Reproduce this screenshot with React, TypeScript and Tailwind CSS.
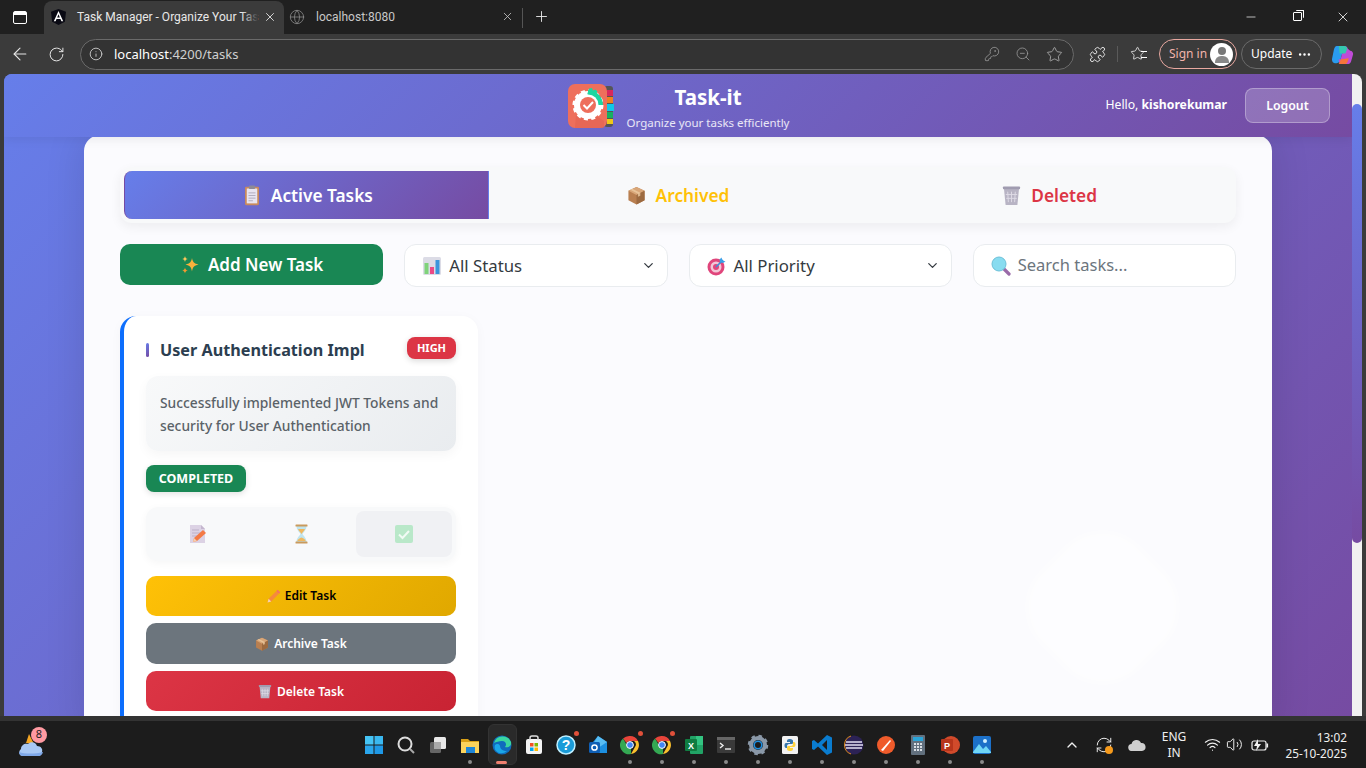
import React from 'react';
import { ArrowLeft, RotateCw, RefreshCw, Info, KeyRound, ZoomOut, Star, Puzzle, X, Plus, Minus, Globe, ChevronDown, ChevronUp, Wifi, Volume2, MoreHorizontal } from 'lucide-react';

type IconProps = { className?: string };

const Clipboard = ({ className }: IconProps) => (
  <svg viewBox="0 0 20 24" className={className}>
    <rect x="2" y="2" width="16" height="21" rx="1.500" fill="#c98a5c" />
    <rect x="4" y="4" width="12" height="17" fill="#e8e4f0" />
    <rect x="6.500" y="0.500" width="7" height="4" rx="1" fill="#8d8a96" />
    <path d="M6 9h8M6 12h8M6 15h8M6 18h5" stroke="#aaa6b8" strokeWidth="1" />
  </svg>
);

const Box = ({ className }: IconProps) => (
  <svg viewBox="0 0 20 20" className={className}>
    <path d="M10 1l8.500 4v10L10 19.500 1.500 15V5z" fill="#b97f50" />
    <path d="M10 1l8.500 4L10 9.500 1.500 5z" fill="#d8a678" />
    <path d="M10 9.500v10l8.500-4.500V5z" fill="#9c6a40" />
    <path d="M5.500 3l8.500 4.200v3l-2.500 1V8.200L3.500 4z" fill="#eccaa0" opacity=".8" />
  </svg>
);

const Trash = ({ className }: IconProps) => (
  <svg viewBox="0 0 20 22" className={className}>
    <path d="M2 3h16l-1.800 18H3.800z" fill="#b8b4c4" />
    <rect x="1" y="1.500" width="18" height="3" rx=".8" fill="#a09cb0" />
    <path d="M6 7l.7 11M10 7v11M14 7l-.7 11M4 10h12M4.500 14h11" stroke="#dedbe6" strokeWidth="1" />
  </svg>
);

const Sparkles = ({ className }: IconProps) => (
  <svg viewBox="0 0 20 20" className={className}>
    <path d="M12 3c.8 4 2 5.500 6.500 6.500C14 10.500 12.800 12 12 16.500 11.200 12 10 10.500 5.500 9.500 10 8.500 11.200 7 12 3z" fill="#f9b13c" />
    <path d="M5 1c.4 2 1 2.600 3 3-2 .4-2.600 1-3 3-.4-2-1-2.600-3-3 2-.4 2.600-1 3-3z" fill="#fcc65a" />
    <path d="M5 12.500c.4 2 1 2.600 3 3-2 .4-2.600 1-3 3-.4-2-1-2.600-3-3 2-.4 2.600-1 3-3z" fill="#f59a2f" />
  </svg>
);

const BarChart = ({ className }: IconProps) => (
  <svg viewBox="0 0 20 20" className={className}>
    <rect x="1" y="1" width="18" height="18" rx="1.500" fill="#dcdce6" />
    <rect x="2.500" y="7" width="4" height="11" fill="#7fd37a" />
    <rect x="8" y="11" width="4" height="7" fill="#ec4a86" />
    <rect x="13.500" y="4" width="4" height="14" fill="#3b95dc" />
  </svg>
);

const Target = ({ className }: IconProps) => (
  <svg viewBox="0 0 20 20" className={className}>
    <circle cx="9" cy="11" r="8.500" fill="#e0457b" />
    <circle cx="9" cy="11" r="5.500" fill="#f2c6d6" />
    <circle cx="9" cy="11" r="3" fill="#e0457b" />
    <path d="M9 11l7-7" stroke="#3a8fd8" strokeWidth="1.600" />
    <path d="M14.500 1.500l1 3 3 1-2.500 1.500-3-1-.5-2.500z" fill="#3a9fe8" />
  </svg>
);

const Magnifier = ({ className }: IconProps) => (
  <svg viewBox="0 0 20 20" className={className}>
    <path d="M12.500 12.500l5.500 5.500" stroke="#9a6aa8" strokeWidth="3.200" strokeLinecap="round" />
    <circle cx="8" cy="8" r="7" fill="#88dcf0" stroke="#6cc0d8" strokeWidth="1" />
  </svg>
);

const MemoPencil = ({ className }: IconProps) => (
  <svg viewBox="0 0 20 20" className={className}>
    <path d="M2 1h11l4 4v14H2z" fill="#dcd2e4" />
    <path d="M13 1l4 4h-4z" fill="#c4b6ce" />
    <path d="M4 6h7M4 9h9M4 12h5" stroke="#bdb0c8" strokeWidth="1" />
    <path d="M5 18l1-4 9-8 3 3-9 8z" fill="#f47a45" />
    <path d="M5 18l1-4 3 3z" fill="#f5d0b0" />
  </svg>
);

const Hourglass = ({ className }: IconProps) => (
  <svg viewBox="0 0 16 20" className={className}>
    <path d="M3 2h10c0 4-3 6-4 8 1 2 4 4 4 8H3c0-4 3-6 4-8-1-2-4-4-4-8z" fill="#bfe4ee" />
    <path d="M4.500 5h7c-.6 1.800-2.500 3-3.500 5-1-2-2.900-3.200-3.500-5zM3.800 17c.4-2 2.800-3 4.200-3.500 1.400.5 3.800 1.500 4.200 3.500z" fill="#f0b860" />
    <rect x="2" y="0.500" width="12" height="2" rx=".6" fill="#c99a5c" />
    <rect x="2" y="17.500" width="12" height="2" rx=".6" fill="#c99a5c" />
  </svg>
);

const CheckBox = ({ className }: IconProps) => (
  <svg viewBox="0 0 20 20" className={className}>
    <rect x="1" y="1" width="18" height="18" rx="2" fill="#b9e8c9" />
    <path d="M5 10.500l3.500 3.500L15 7" fill="none" stroke="#f2fbf5" strokeWidth="2" />
  </svg>
);

const Pencil = ({ className }: IconProps) => (
  <svg viewBox="0 0 20 20" className={className}>
    <path d="M2 18l1.500-5L14 2.500 17.500 6 7 16.500z" fill="#f58a3c" />
    <path d="M2 18l1.500-5 3.500 3.500z" fill="#f6d3ad" />
    <path d="M14 2.500l1.500-1.500 3.500 3.500L17.500 6z" fill="#f26b6b" />
  </svg>
);

const Logo = () => (
  <svg viewBox="0 0 46 46" className="h-[46px] w-[46px] shrink-0">
    <rect x="36" y="3" width="9" height="41" rx="3" fill="#555" />
    <rect x="39" y="7" width="6" height="6" fill="#d8285c" />
    <rect x="39" y="14" width="6" height="6" fill="#f08020" />
    <rect x="39" y="21" width="7" height="7" fill="#10c8e8" />
    <rect x="39" y="29" width="6" height="6" fill="#18b060" />
    <rect x="39" y="36" width="6" height="5" fill="#f0c818" />
    <rect x="0" y="1" width="39" height="44" rx="7" fill="#ee6f5c" />
    <path d="M8 32L30 34 36 38V45H7z" fill="#e0604e" opacity=".5" />
    <circle cx="20" cy="22" r="14" fill="#fff" stroke="#fff" strokeWidth="3" strokeDasharray="4 3.300" />
    <path d="M20 7a15 15 0 0 1 15 15h-5a10 10 0 0 0-10-10z" fill="#1ed6a0" />
    <path d="M21 5.500l3-.5 1 2.500 2.500-1 2 2-1.500 2.500 2.500 1 1 2.500-2.500 1.500 3 1 .3 3-7-1-6-8z" fill="#1ed6a0" />
    <circle cx="20" cy="22" r="10.500" fill="#fff" />
    <circle cx="20" cy="22" r="8" fill="#ee6f5c" />
    <path d="M15.500 22l3.500 3.500 6-6.500" fill="none" stroke="#fff" strokeWidth="2" />
  </svg>
);

const WinLogo = () => (
  <svg viewBox="0 0 18 18" className="h-[18px] w-[18px]">
    <rect width="8.500" height="8.500" fill="#45c4f5" />
    <rect x="9.500" width="8.500" height="8.500" fill="#3ab8f0" />
    <rect y="9.500" width="8.500" height="8.500" fill="#2aa6ec" />
    <rect x="9.500" y="9.500" width="8.500" height="8.500" fill="#1e98e6" />
  </svg>
);

const tb = 'h-[22px] w-[22px]';

function Chrome() {
  return (
    <svg viewBox="0 0 22 22" className={tb}>
      <path d="M11 2a9 9 0 0 1 8 5h-8a4 4 0 0 0-3.500 2L4 4.500A9 9 0 0 1 11 2z" fill="#e8443a" />
      <path d="M19 7a9 9 0 0 1-7 13l4-7a4 4 0 0 0-1-6z" fill="#fbc02d" />
      <path d="M4 4.500l3.800 6.500a4 4 0 0 0 4.200 2.400L12 20a9 9 0 0 1-8-15.500z" fill="#34a853" />
      <circle cx="11" cy="11" r="3.400" fill="#4285f4" stroke="#fff" strokeWidth="1" />
    </svg>
  );
}

const taskbarIcons: { node: React.ReactNode; dot?: boolean; badge?: boolean }[] = [
  { node: <WinLogo /> },
  { node: <svg viewBox="0 0 22 22" className={tb}><circle cx="10" cy="10" r="6.500" fill="none" stroke="#ddd" strokeWidth="2" /><path d="M15 15l4 4" stroke="#aaa" strokeWidth="2" /></svg> },
  { node: <svg viewBox="0 0 22 22" className={tb}><rect x="3" y="8" width="11" height="11" rx="1.500" fill="#666" /><rect x="7" y="3" width="12" height="12" rx="1.500" fill="#e8e8e8" /><rect x="7" y="8" width="7" height="7" fill="#aaa" /></svg> },
  { dot: true, node: <svg viewBox="0 0 22 22" className={tb}><path d="M2 5h7l2 2h9v2H2z" fill="#d9a017" /><rect x="2" y="8" width="18" height="11" fill="#fbd35c" /><rect x="7" y="13" width="9" height="6" fill="#1e86d8" /></svg> },
  { node: <svg viewBox="0 0 22 22" className="relative h-[22px] w-[22px]"><circle cx="11" cy="11" r="9.500" fill="#0f6cbd" /><path d="M3 9a9 9 0 0 1 17-1c1 4-3 6-6 5 2-2 1-6-3-6-3 0-6 1-8 2z" fill="#3ad6a0" /><path d="M9 12c0 3 3 5 7 5a9 9 0 0 1-8 2c-4-2-5-5-4-8 1-1 4-2 5 1z" fill="#1ba7e8" /></svg> },
  { node: <svg viewBox="0 0 22 22" className={tb}><rect x="3" y="5" width="16" height="15" rx="2" fill="#f4f4f4" /><path d="M7 6V4a2 2 0 0 1 2-2h4a2 2 0 0 1 2 2v2" fill="none" stroke="#ddd" strokeWidth="1.500" /><rect x="7" y="9" width="3.500" height="3.500" fill="#f25022" /><rect x="11.500" y="9" width="3.500" height="3.500" fill="#7fba00" /><rect x="7" y="13.500" width="3.500" height="3.500" fill="#00a4ef" /><rect x="11.500" y="13.500" width="3.500" height="3.500" fill="#ffb900" /></svg> },
  { badge: true, node: <svg viewBox="0 0 22 22" className={tb}><circle cx="11" cy="11" r="9" fill="#1a9bd8" stroke="#bfefff" strokeWidth="1.500" /><text x="11" y="16" textAnchor="middle" fontSize="14" fontWeight="700" fill="#fff" fontFamily="Liberation Sans">?</text></svg> },
  { node: <svg viewBox="0 0 22 22" className={tb}><path d="M11 2l9 6v11H6V8z" fill="#1c8fe0" /><path d="M11 2l9 6-9 6-5-4z" fill="#58bdf4" /><rect x="2" y="8" width="11" height="11" rx="1.500" fill="#0f5fb5" /><circle cx="7.500" cy="13.500" r="2.600" fill="none" stroke="#fff" strokeWidth="1.500" /></svg> },
  { dot: true, badge: true, node: <Chrome /> },
  { dot: true, badge: true, node: <Chrome /> },
  { dot: true, node: <svg viewBox="0 0 22 22" className={tb}><rect x="7" y="2" width="13" height="18" rx="1" fill="#21a366" /><rect x="13" y="2" width="7" height="9" fill="#33c481" /><rect x="2" y="5" width="12" height="12" rx="1" fill="#107c41" /><text x="8" y="14.500" textAnchor="middle" fontSize="9" fontWeight="700" fill="#fff" fontFamily="Liberation Sans">X</text></svg> },
  { dot: true, node: <svg viewBox="0 0 22 22" className={tb}><rect x="2" y="3" width="18" height="16" rx="1" fill="#3a3a3a" /><rect x="2" y="3" width="18" height="3" fill="#666" /><path d="M5 9l3 2.500L5 14" fill="none" stroke="#eee" strokeWidth="1.400" /><path d="M10 15h6" stroke="#eee" strokeWidth="1.400" /></svg> },
  { dot: true, node: <svg viewBox="0 0 22 22" className={tb}><circle cx="11" cy="11" r="7" fill="none" stroke="#8a98a8" strokeWidth="4" /><circle cx="11" cy="11" r="9" fill="none" stroke="#8a98a8" strokeWidth="2.500" strokeDasharray="3.500 3.600" /><circle cx="11" cy="11" r="3.800" fill="none" stroke="#1f8fe0" strokeWidth="1.600" /></svg> },
  { dot: true, node: <svg viewBox="0 0 22 22" className={tb}><rect x="3" y="2" width="16" height="18" rx="1.500" fill="#f2f2f2" /><path d="M11 5c-3 0-3 1-3 3h3v1H7c-2 0-2 5 0 5h1v-2c0-1 1-2 2-2h3c1 0 1-1 1-2V7c0-1-1-2-3-2z" fill="#3776ab" /><path d="M11 17c3 0 3-1 3-3h-3v-1h4c2 0 2-5 0-5h-1v2c0 1-1 2-2 2H9c-1 0-1 1-1 2v1c0 1 1 2 3 2z" fill="#ffd43b" /></svg> },
  { dot: true, node: <svg viewBox="0 0 22 22" className={tb}><path d="M16 1l5 2.500v15L16 21 7 12.500 3 16l-2-1V7l2-1 4 3.500z" fill="#0a7ccf" /><path d="M16 6l-5 5 5 5z" fill="#1c1c1c" /></svg> },
  { dot: true, node: <svg viewBox="0 0 22 22" className={tb}><circle cx="11" cy="11" r="9.500" fill="#2c2255" /><path d="M3 8h16M2 11h18M3 14h16" stroke="#e4e0f4" strokeWidth="1.500" /><path d="M8 2a9.500 9.500 0 0 0 0 18" fill="none" stroke="#e89020" strokeWidth="1" /></svg> },
  { dot: true, node: <svg viewBox="0 0 22 22" className={tb}><circle cx="11" cy="11" r="9" fill="#ef5b2b" /><path d="M6 16L15 6l1 1-8 10z" fill="#fff" /></svg> },
  { dot: true, node: <svg viewBox="0 0 22 22" className={tb}><rect x="4" y="1" width="14" height="20" rx="1" fill="#62707e" /><rect x="6" y="3" width="10" height="4" fill="#2aa4d8" /><path d="M7 10h2M10 10h2M13 10h2M7 13h2M10 13h2M13 13h2M7 16h2M10 16h2M13 16h2" stroke="#d8dee4" strokeWidth="2" /></svg> },
  { dot: true, node: <svg viewBox="0 0 22 22" className={tb}><circle cx="12" cy="11" r="9" fill="#d14a2b" /><rect x="2" y="5" width="12" height="12" rx="1" fill="#b7351c" /><text x="8" y="14.500" textAnchor="middle" fontSize="9" fontWeight="700" fill="#fff" fontFamily="Liberation Sans">P</text></svg> },
  { dot: true, node: <svg viewBox="0 0 22 22" className={tb}><rect x="2" y="2" width="18" height="18" rx="2" fill="#1c70c8" /><path d="M2 18l6-8 4 5 3-3 5 6v1H2z" fill="#6fd6f6" /><circle cx="14" cy="7" r="2" fill="#cfefff" /></svg> },
];

const TabStrip = () => (
  <div className="flex h-[34px] shrink-0 items-end bg-[#202020] font-['Roboto',sans-serif] text-[#e8e8e8]">
    <div className="flex h-full w-[44px] items-center pl-[13px]">
      <div className="h-[13px] w-[14px] rounded-[2px] border border-white">
        <div className="h-[3px] bg-white" />
      </div>
    </div>
    <div className="flex h-[33px] w-[240px] items-center rounded-t-lg bg-[#3b3b3b] pb-[2px] pl-[7px] pr-[7px]">
      <svg viewBox="0 0 16 17" className="h-[16px] w-[15px] shrink-0">
        <path d="M8 0L0 3l1.200 10.500L8 17l6.800-3.500L16 3z" fill="#0a0a14" />
        <path d="M8 2L3 13h1.900l1-2.500h4.200l1 2.500H13zM6.600 9L8 5.600 9.400 9z" fill="#fff" />
      </svg>
      <div className="relative ml-[11px] whitespace-nowrap text-[12px]">
        Task Manager - Organize Your Tas
        <div className="absolute bottom-0 right-0 top-0 w-[16px] bg-[linear-gradient(90deg,transparent,#3b3b3b)]" />
      </div>
      <X className="ml-auto h-[14px] w-[14px] shrink-0" strokeWidth={1.500} />
    </div>
    <div className="flex h-[33px] w-[238px] items-center pb-[2px] pl-[5px] pr-[8px] text-[#c8c8c8]">
      <Globe className="h-[16px] w-[16px] shrink-0 text-[#8a8a8a]" strokeWidth={1.200} />
      <span className="ml-[11px] text-[12px]">localhost:8080</span>
      <X className="ml-auto h-[13px] w-[13px]" strokeWidth={1.500} />
    </div>
    <div className="mb-[6px] h-[20px] w-px bg-[#555]" />
    <Plus className="mb-[9px] ml-[10px] h-[17px] w-[17px]" strokeWidth={1.300} />
    <div className="ml-auto flex h-full items-center pb-[1px] text-white">
      <div className="flex w-[46px] justify-center"><Minus className="h-[14px] w-[14px]" strokeWidth={1.200} /></div>
      <div className="flex w-[46px] justify-center">
        <div className="relative h-[9px] w-[9px] rounded-[1px] border border-white">
          <div className="absolute -right-[3px] -top-[3px] h-[8px] w-[8px] rounded-[1px] border-r border-t border-white" />
        </div>
      </div>
      <div className="flex w-[46px] justify-center"><X className="h-[16px] w-[16px]" strokeWidth={1.200} /></div>
    </div>
  </div>
);

const Toolbar = () => (
  <div className="flex h-[40px] shrink-0 items-center bg-[#3b3b3b] text-[#e6e6e6]">
    <div className="flex w-[38px] justify-center pl-[2px]"><ArrowLeft className="h-[20px] w-[20px]" strokeWidth={1.300} /></div>
    <div className="flex w-[36px] justify-center"><RotateCw className="h-[17px] w-[17px]" strokeWidth={1.400} /></div>
    <div className="ml-[6px] flex h-[31px] w-[994px] items-center rounded-full border border-[#6a6a6a] bg-[#333333] pl-[8px] pr-[10px]">
      <Info className="h-[14px] w-[14px] text-[#cfcfcf]" strokeWidth={1.500} />
      <span className="ml-[11px] pt-[1px] text-[13px] text-white">localhost<span className="text-[#d0d0d0]">:4200/tasks</span></span>
      <div className="ml-auto flex items-center gap-[15px] text-[#9a9a9a]">
        <KeyRound className="h-[16px] w-[16px]" strokeWidth={1.200} />
        <ZoomOut className="h-[16px] w-[16px]" strokeWidth={1.200} />
        <Star className="h-[17px] w-[17px] text-[#b0b0b0]" strokeWidth={1.200} />
      </div>
    </div>
    <Puzzle className="ml-[15px] h-[17px] w-[17px]" strokeWidth={1.400} />
    <div className="ml-[11px] h-[16px] w-px bg-[#5a5a5a]" />
    <div className="relative ml-[12px] h-[17px] w-[17px]">
      <Star className="h-[15px] w-[15px]" strokeWidth={1.400} />
      <div className="absolute right-0 top-[5px] h-[7px] w-[6px] border-b border-t border-white" />
    </div>
    <div className="ml-[12px] flex h-[30px] w-[78px] items-center rounded-full border border-[#e8a8a0] pl-[9px] text-[12px] text-[#f2b4ac]">
      Sign in
      <div className="ml-auto mr-[3px] h-[23px] w-[23px] overflow-hidden rounded-full bg-white">
        <div className="mx-auto mt-[4px] h-[8px] w-[8px] rounded-full bg-[#777]" />
        <div className="mx-auto mt-[1px] h-[7px] w-[14px] rounded-t-md bg-[#888]" />
      </div>
    </div>
    <div className="ml-[4px] flex h-[30px] w-[81px] items-center justify-between rounded-full border border-[#6a6a6a] px-[9px] text-[12px] text-white">
      Update
      <MoreHorizontal className="h-[15px] w-[15px]" strokeWidth={2} />
    </div>
    <svg viewBox="0 0 24 24" className="ml-[9px] h-[23px] w-[23px]">
      <path d="M6 3h8l-4 14c-.5 2-2 4-4 4H4c-2 0-3-2-3-4l2-10c.4-2 1.500-4 3-4z" fill="#2a9cf0" />
      <path d="M10 17l4-14c2 0 3 1 3.500 3L20 8c2 0 3.500 2 3 4l-2 7c-.5 2-2 3-4 3h-6c-2 0-3-2-3-5z" fill="#c04bd8" />
      <path d="M8 22h6c2 0 3-1 3.500-3l1-3-8 1z" fill="#f6753c" />
      <path d="M8 3h6c1.500 0 2.500 1 3 3l-2 5H9z" fill="#34c8b0" />
    </svg>
  </div>
);

const TaskCard = () => (
  <div className="w-[358px] rounded-2xl border-l-4 border-[#0d6efd] bg-white pb-[24px] pl-[22px] pr-[22px] pt-[21px] shadow-[0_2px_12px_rgba(0,0,0,0.03)]">
    <div className="flex items-start justify-between">
      <div className="flex h-[26px] items-center">
        <div className="h-[14px] w-[3px] rounded-sm bg-[linear-gradient(135deg,#667eea,#764ba2)]" />
        <h3 className="ml-[11px] whitespace-nowrap text-[16.200px] font-bold text-[#2c3e50]">User Authentication Impl</h3>
      </div>
      <span className="flex h-[22px] w-[49px] items-center justify-center rounded-lg bg-[#dc3545] text-[11px] font-bold text-white shadow-[0_2px_6px_rgba(0,0,0,0.15)]">HIGH</span>
    </div>
    <div className="mt-[13px] h-[75px] rounded-xl bg-[linear-gradient(135deg,#f8f9fa,#e9ecef)] px-[14px] pt-[15px] text-[13.800px] font-medium leading-[23px] text-[#5a6268] shadow-[0_4px_12px_rgba(0,0,0,0.04)]">
      Successfully implemented JWT Tokens and security for User Authentication
    </div>
    <div className="mt-[14px] flex h-[27px] w-[100px] items-center justify-center rounded-lg bg-[#198754] pt-[2px] text-[12.500px] font-bold text-white shadow-[0_2px_6px_rgba(0,0,0,0.12)]">COMPLETED</div>
    <div className="mt-[15px] grid h-[54px] grid-cols-3 items-center gap-[7px] rounded-xl bg-[#f8f9fa] p-[4px] shadow-[0_2px_8px_rgba(0,0,0,0.04)]">
      <div className="flex h-full items-center justify-center"><MemoPencil className="h-[20px] w-[20px]" /></div>
      <div className="flex h-full items-center justify-center"><Hourglass className="h-[20px] w-[17px]" /></div>
      <div className="flex h-full items-center justify-center rounded-lg bg-[#f0f1f4]"><CheckBox className="h-[20px] w-[20px]" /></div>
    </div>
    <div className="mt-[15px] flex flex-col gap-[7px] text-[12px] font-semibold">
      <div className="flex h-[40px] items-center justify-center gap-[4px] rounded-[10px] bg-[linear-gradient(135deg,#ffc107,#e0a800)] text-black">
        <Pencil className="h-[15px] w-[15px]" /> Edit Task
      </div>
      <div className="flex h-[41px] items-center justify-center gap-[5px] rounded-[10px] bg-[#6c757d] pt-[1px] text-white">
        <Box className="h-[14px] w-[14px]" /> Archive Task
      </div>
      <div className="flex h-[40px] items-center justify-center gap-[5px] rounded-[10px] bg-[linear-gradient(135deg,#dc3545,#c82333)] pt-[1px] text-white">
        <Trash className="h-[15px] w-[14px]" /> Delete Task
      </div>
    </div>
  </div>
);

const Selector = ({ icon, label }: { icon: React.ReactNode; label: string }) => (
  <div className="flex h-[43px] items-center rounded-xl border border-[#e9ecef] bg-white pl-[17px] pr-[11px] text-[16.800px] text-[#343a40]">
    {icon}
    <span className="ml-[7px]">{label}</span>
    <ChevronDown className="ml-auto h-[15px] w-[15px]" strokeWidth={2} />
  </div>
);

const Page = () => (
  <div className="relative flex-1 overflow-hidden rounded-tl-lg bg-[linear-gradient(135deg,#667eea_0%,#764ba2_100%)]">
    <header className="relative z-10 grid h-[63px] grid-cols-[1fr_auto_1fr] items-center bg-[linear-gradient(135deg,#667eea_0%,#764ba2_100%)] text-white shadow-[0_2px_10px_rgba(0,0,0,0.08)]">
      <div />
      <div className="flex items-center gap-[14px]">
        <Logo />
        <div className="flex w-[160px] flex-col items-center pt-[4px]">
          <div className="text-[20.500px] font-bold leading-[28px]">Task-it</div>
          <div className="mt-[3px] whitespace-nowrap text-[11.500px] leading-[18px] text-white/85">Organize your tasks efficiently</div>
        </div>
      </div>
      <div className="flex items-center justify-end pr-[22px]">
        <span className="text-[12.200px]">Hello, <b className="font-bold">kishorekumar</b></span>
        <div className="ml-[18px] flex h-[35px] w-[85px] items-center justify-center rounded-lg border border-white/30 bg-white/20 pt-[1px] text-[12.300px] font-semibold">Logout</div>
      </div>
    </header>
    <main className="relative mx-auto -mt-[2px] w-[1188px] rounded-t-2xl bg-[#fbfbfe] px-[36px] pt-[32px] shadow-[0_0_40px_rgba(0,0,0,0.12)]">
      <div className="absolute left-[951px] top-[405px] h-[135px] w-[135px] rotate-45 rounded-[50px] bg-white/60 blur-[3px]" />
      <div className="relative">
        <div className="grid grid-cols-3 gap-[7px] rounded-xl bg-[#f8f9fa] p-[4px] text-[17.300px] font-semibold shadow-[0_4px_12px_rgba(0,0,0,0.06)]">
          <div className="flex h-[48px] items-center justify-center gap-[10px] rounded-l-lg border-x border-l-[#764ba2] border-r-[#667eea] bg-[linear-gradient(135deg,#667eea,#764ba2)] pl-[3px] pt-[1px] text-white">
            <Clipboard className="h-[21px] w-[18px]" /> Active Tasks
          </div>
          <div className="flex h-[48px] items-center justify-center gap-[10px] pt-[1px] text-[#ffc107]">
            <Box className="h-[19px] w-[19px]" /> Archived
          </div>
          <div className="flex h-[48px] items-center justify-center gap-[10px] pt-[1px] text-[#dc3545]">
            <Trash className="h-[21px] w-[19px]" /> Deleted
          </div>
        </div>
        <div className="mt-[21px] grid grid-cols-4 items-start gap-[21px]">
          <div className="flex h-[41px] items-center justify-center gap-[8px] rounded-[10px] bg-[#198754] text-[17px] font-semibold text-white">
            <Sparkles className="h-[20px] w-[20px]" /> Add New Task
          </div>
          <Selector icon={<BarChart className="h-[20px] w-[20px]" />} label="All Status" />
          <Selector icon={<Target className="h-[20px] w-[20px]" />} label="All Priority" />
          <div className="flex h-[43px] items-center rounded-xl border border-[#e9ecef] bg-white pl-[17px] text-[16.500px] text-[#6c757d]">
            <Magnifier className="h-[20px] w-[20px]" />
            <span className="ml-[7px]">Search tasks...</span>
          </div>
        </div>
        <div className="mt-[29px]">
          <TaskCard />
        </div>
      </div>
    </main>
  </div>
);

const Taskbar = () => (
  <div className="flex h-[47px] shrink-0 items-center bg-[#1c1c1c] text-[#f0f0f0]">
    <div className="flex h-full w-[358px] items-center pl-[18px]">
      <div className="relative h-[26px] w-[26px]">
        <svg viewBox="0 0 26 26" className="h-[26px] w-[26px]">
          <path d="M1 10l7 1 3-9 5 10z" fill="#f5a623" />
          <path d="M5 24c-4 0-5-5-2-7 0-4 4-6 7-5 3-3 8-2 9 2 4 0 6 3 5 6-.5 2-2 4-4 4z" fill="#a8c8f4" />
          <path d="M5 24c-3 0-4-2-4-4 6 2 16 2 24 0-.5 2-2 4-4 4z" fill="#7fa8e8" />
        </svg>
        <div className="absolute -right-[3px] -top-[5px] flex h-[16px] w-[16px] items-center justify-center rounded-full bg-[#ff9aa2] text-[11px] text-[#222]">8</div>
      </div>
    </div>
    <div className="flex h-full w-[640px]">
      {taskbarIcons.map((icon, i) => (
        <div key={i} className="relative flex h-full w-8 items-center justify-center">
          {i === 4 && <div className="absolute bottom-[3px] left-[2px] top-[3px] w-[29px] rounded-md border border-[#333] bg-[#2a2a2a]" />}
          {icon.node}
          {icon.dot && <div className="absolute bottom-[4px] left-[14px] h-[4px] w-[4px] rounded-full bg-[#8a8a8a]" />}
          {icon.badge && <div className="absolute right-[3px] top-[10px] h-[5px] w-[5px] rounded-full bg-[#e0503a]" />}
          {i === 4 && <div className="absolute bottom-[4px] left-[10px] h-[3px] w-[11px] rounded-full bg-[#f08070]" />}
        </div>
      ))}
    </div>
    <div className="flex h-full flex-1 items-center">
      <ChevronUp className="ml-[66px] h-[16px] w-[16px]" strokeWidth={2} />
      <div className="relative ml-[15px] h-[18px] w-[18px]">
        <RefreshCw className="h-[18px] w-[18px]" strokeWidth={1.300} />
        <div className="absolute bottom-0 right-0 h-[8px] w-[8px] rounded-full bg-[#f59a1c]" />
      </div>
      <svg viewBox="0 0 18 12" className="ml-[15px] h-[12px] w-[18px]">
        <path d="M4 12a3.500 3.500 0 0 1-.5-7A5 5 0 0 1 13 4a4 4 0 0 1 1 8z" fill="#cfcfcf" />
      </svg>
      <div className="ml-[6px] flex w-[44px] flex-col items-center text-[12px] leading-[16px]">
        <span>ENG</span>
        <span>IN</span>
      </div>
      <Wifi className="ml-[8px] h-[17px] w-[17px]" strokeWidth={1.600} />
      <Volume2 className="ml-[5px] h-[17px] w-[17px]" strokeWidth={1.400} />
      <svg viewBox="0 0 18 12" className="ml-[8px] h-[12px] w-[18px]">
        <rect x="1" y="2" width="14" height="9" rx="2" fill="none" stroke="#f0f0f0" strokeWidth="1.200" />
        <rect x="15.500" y="4.500" width="1.600" height="4" fill="#f0f0f0" />
        <path d="M7 0L3 7h3l-1 5 5-7H7z" fill="#f0f0f0" />
      </svg>
      <div className="ml-auto flex flex-col items-end pr-[19px] text-[11.800px] leading-[16px]">
        <span>13:02</span>
        <span>25-10-2025</span>
      </div>
    </div>
  </div>
);

const App: React.FC = () => {
  return (
    <div className="flex h-[768px] w-[1366px] flex-col overflow-hidden bg-[#3b3b3b] font-['Noto_Sans',sans-serif]">
      <TabStrip />
      <Toolbar />
      <div className="flex min-h-0 flex-1 pl-[4px] pr-[4px]">
        <Page />
        <div className="w-[10px] rounded-tr-lg bg-[#f1f1f1] pt-[30px]">
          <div className="h-[439px] rounded-md bg-[linear-gradient(180deg,#667eea,#764ba2)]" />
        </div>
      </div>
      <div className="h-[5px] shrink-0 bg-[#333333]" />
      <Taskbar />
    </div>
  );
};

export default App;
